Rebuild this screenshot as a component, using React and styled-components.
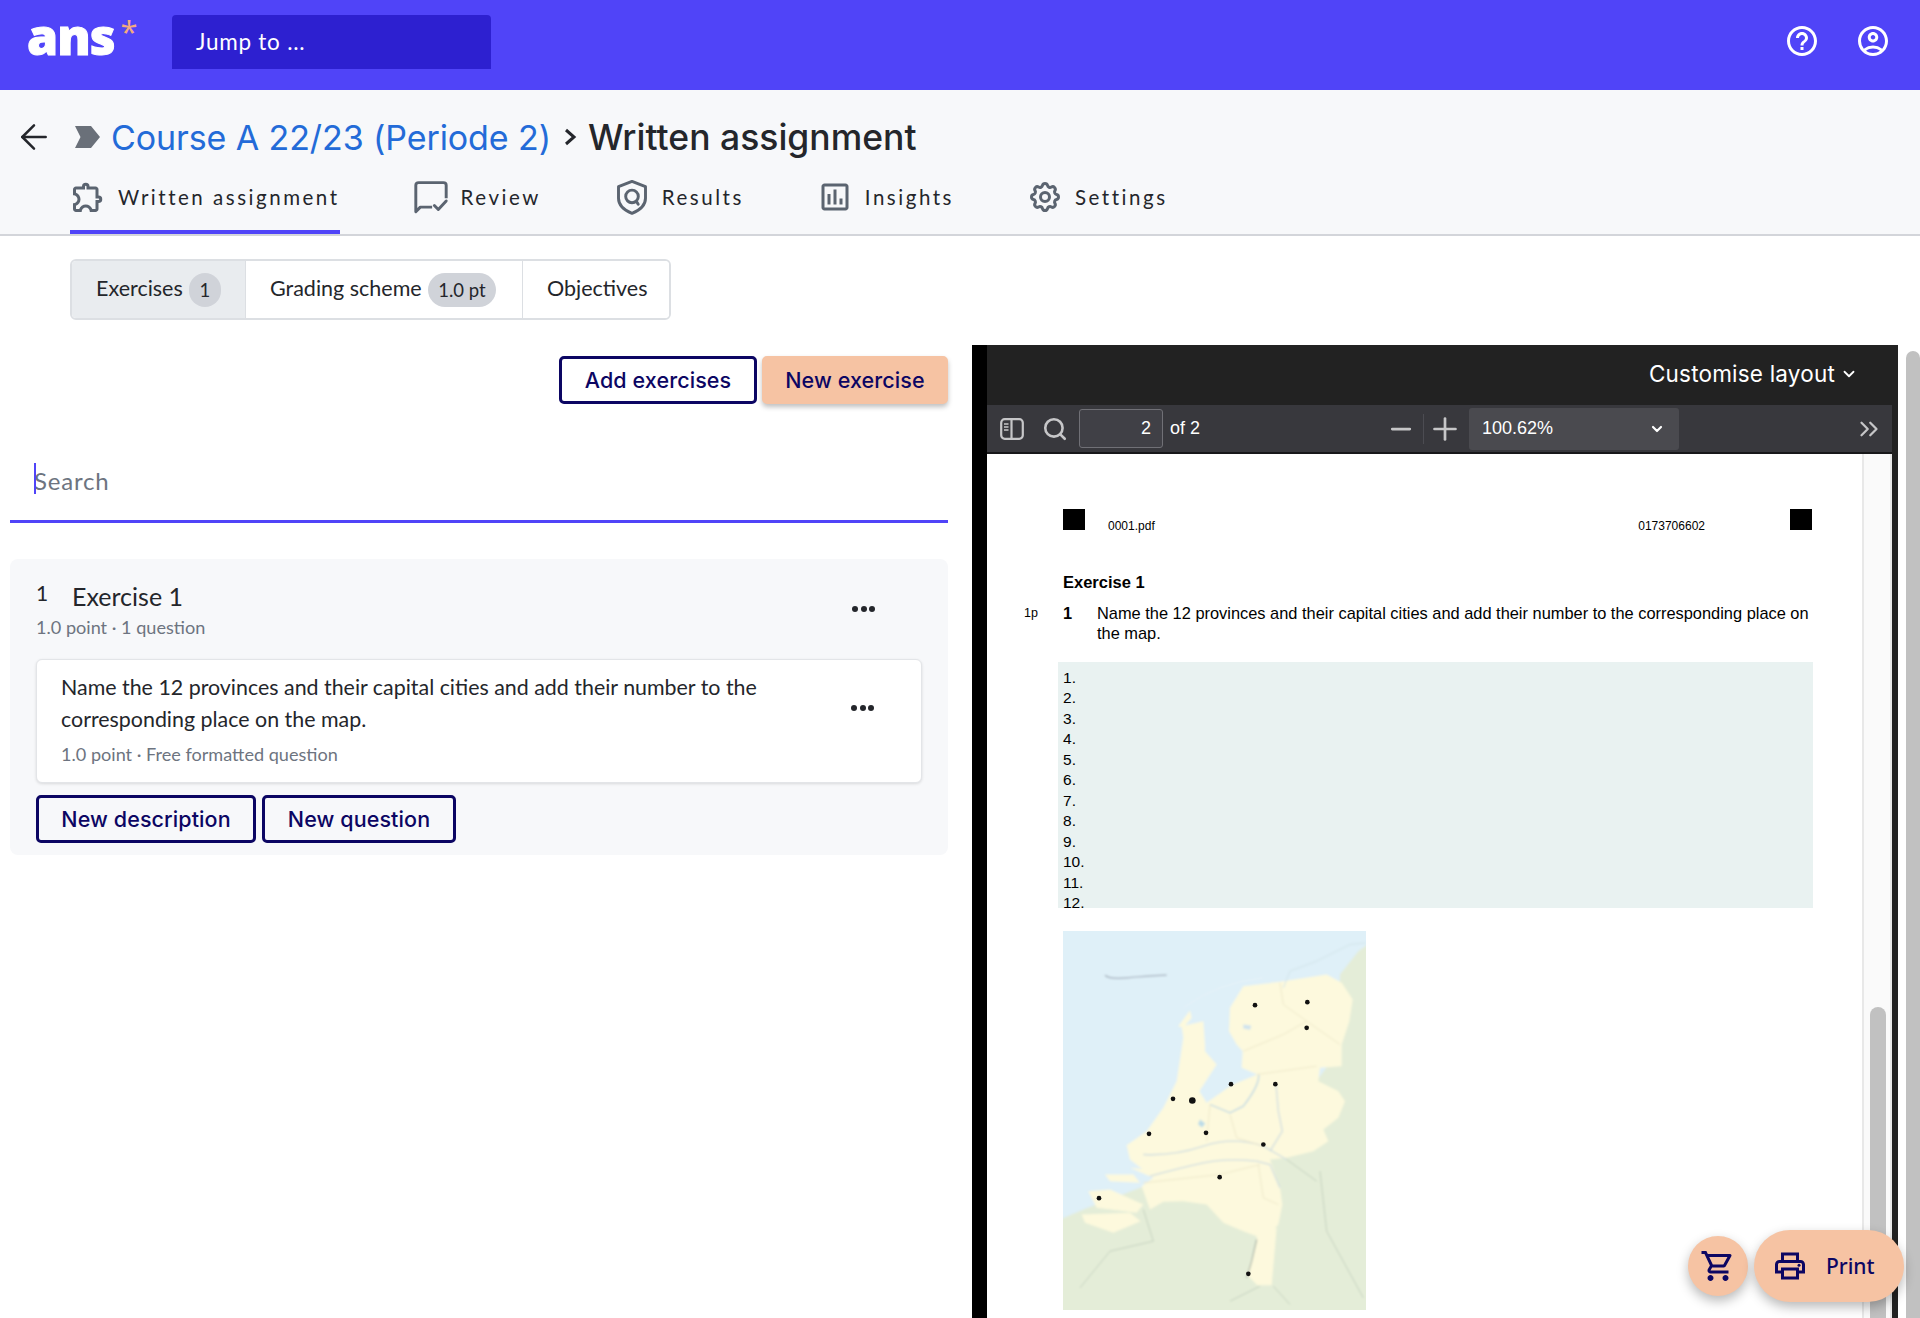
import React from "react";
import styled, { createGlobalStyle } from "styled-components";
import { ArrowLeft, Minus, Plus, ChevronDown, ChevronsRight, Search as SearchIcon } from "lucide-react";
import { MdHelpOutline, MdOutlineAccountCircle, MdOutlineExtension, MdOutlinePrint, MdOutlineShoppingCart, MdOutlineAssessment } from "react-icons/md";
import { HiOutlineCog } from "react-icons/hi";

const heading = `Inter, "Open Sans", sans-serif`;
const body = `Lato, "Open Sans", sans-serif`;
const pdf = `"Liberation Sans", Arial, sans-serif`;
const navy = "#0c0663";
const peach = "#f6c3a3";
const purple = "#5044f8";

const Global = createGlobalStyle`
  html, body {
    margin: 0;
    height: 1318px;
    overflow: hidden;
    background: #fff;
    font-family: ${body};
    color: #24262b;
  }
  * { box-sizing: border-box; }
`;

const Page = styled.div`
  width: 1920px;
  height: 1318px;
  position: relative;
  overflow: hidden;
`;

const Header = styled.header`
  height: 90px;
  background: ${purple};
  display: flex;
  align-items: flex-start;
  padding: 15px 29px 0 27px;
`;

const Logo = styled.div`
  width: 145px;
  height: 54px;
  display: flex;
  align-items: flex-start;
  margin-top: -5px;
  font: 800 50px/52px ${`"Open Sans", sans-serif`};
  letter-spacing: -1px;
  -webkit-text-stroke: 1px #fff;
  color: #fff;
`;

const LogoStar = styled.span`
  font: 400 31px/30px ${`"Open Sans", sans-serif`};
  -webkit-text-stroke: 0;
  color: #f3ab7e;
  margin: 6px 0 0 6px;
`;

const JumpTo = styled.div`
  width: 319px;
  height: 54px;
  background: #2d20d0;
  border-radius: 4px 4px 0 0;
  display: flex;
  align-items: center;
  padding: 0 0 1px 24px;
  color: #fff;
  font: 400 22.5px ${body};
  letter-spacing: 0.75px;
`;

const HeaderIcons = styled.div`
  margin-left: auto;
  margin-top: 8px;
  display: flex;
  gap: 35px;
  color: #fff;
  font-size: 36px;
  line-height: 0;
`;

const SubHeader = styled.div`
  height: 146px;
  background: #f7f8fa;
  border-bottom: 2px solid #d3d5da;
  position: relative;
`;

const Crumbs = styled.div`
  height: 90px;
  display: flex;
  align-items: center;
  padding: 4px 0 0 14px;
  font: 500 34px ${heading};
`;

const CrumbMark = styled.svg`
  width: 25px;
  height: 22px;
  margin: 0 11px 0 21px;
  flex: none;
`;

const CrumbLink = styled.a`
  color: #236bd8;
  font-weight: 400;
  letter-spacing: -0.1px;
  white-space: nowrap;
`;

const CrumbSep = styled.svg`
  width: 16px;
  height: 20px;
  margin: 0 10px 0 11px;
  flex: none;
`;

const CrumbCurrent = styled.span`
  color: #24262b;
  font-size: 35.5px;
  white-space: nowrap;
`;

const Tabs = styled.nav`
  display: flex;
  gap: 73px;
  padding-left: 70px;
`;

const TabItem = styled.a`
  height: 54px;
  display: flex;
  align-items: flex-start;
  gap: 12px;
  color: #24262b;
  font: 400 20.5px/34px ${body};
  letter-spacing: 2.52px;
  border-bottom: 4px solid ${(p) => (p.$active ? purple : "transparent")};
  svg { color: #5b6470; width: 36px; height: 36px; margin-top: -1px; flex: none; }
`;

const SubTabs = styled.div`
  display: inline-flex;
  margin: 23px 0 25px 70px;
  height: 61px;
  border: 2px solid #dcdfe3;
  border-radius: 6px;
  overflow: hidden;
`;

const SubTab = styled.div`
  display: flex;
  align-items: center;
  gap: 6px;
  padding: 0 0 3px 24px;
  width: ${(p) => p.$w}px;
  font: 400 21.5px ${body};
  color: #24262b;
  background: ${(p) => (p.$active ? "#e9ecef" : "#fff")};
  border-left: ${(p) => (p.$first ? "0" : "1px solid #dcdfe3")};
  white-space: nowrap;
`;

const Pill = styled.span`
  height: 34px;
  min-width: 32px;
  padding: 0 10.5px;
  margin-top: 3px;
  border-radius: 17px;
  background: #d0d3d9;
  display: inline-flex;
  align-items: center;
  justify-content: center;
  font-size: 18.5px;
`;

const Split = styled.div`
  display: flex;
  align-items: flex-start;
`;

const LeftCol = styled.div`
  width: 972px;
  padding: 11px 24px 0 10px;
`;

const Actions = styled.div`
  display: flex;
  justify-content: flex-end;
  gap: 5px;
`;

const Button = styled.button`
  height: 48px;
  padding: 0;
  border-radius: 5px;
  border: 3px solid ${(p) => (p.$filled ? peach : navy)};
  background: ${(p) => (p.$filled ? peach : "transparent")};
  box-shadow: ${(p) => (p.$filled ? "0 3px 5px rgba(0,0,0,.25)" : "none")};
  color: ${navy};
  font: 500 21.5px ${heading};
  letter-spacing: 0.1px;
  white-space: nowrap;
  width: ${(p) => p.$w}px;
`;

const SearchBar = styled.div`
  margin-top: 45px;
  height: 74px;
  border-bottom: 3px solid ${purple};
  position: relative;
  display: flex;
  align-items: center;
  padding: 0 0 8px 24px;
  font: 400 24px ${body};
  letter-spacing: 0.8px;
  color: #6d7480;
`;

const Caret = styled.span`
  position: absolute;
  left: 24px;
  top: 14px;
  width: 2px;
  height: 31px;
  background: ${purple};
`;

const ExerciseCard = styled.section`
  margin-top: 36px;
  height: 296px;
  background: #f7f8fa;
  border-radius: 8px;
  padding: 22px 26px 0;
`;

const ExerciseHead = styled.div`
  display: flex;
  justify-content: space-between;
  height: 78px;
`;

const TitleRow = styled.div`
  display: flex;
  align-items: flex-start;
  font: 400 25px/30px ${body};
`;

const TitleNum = styled.span`
  width: 36px;
  font-size: 21px;
  line-height: 24px;
`;

const Meta = styled.div`
  font: 400 18.1px/24px ${body};
  color: #6d7480;
  margin-top: ${(p) => p.$top || 0}px;
`;

const Dots = styled.div`
  display: flex;
  gap: 2.5px;
  margin: ${(p) => p.$m};
  span { width: 6px; height: 6px; border-radius: 50%; background: #24262b; }
`;

const QuestionCard = styled.div`
  height: 124px;
  background: #fff;
  border: 1px solid #e3e5e8;
  border-radius: 6px;
  box-shadow: 0 1px 3px rgba(0,0,0,.12);
  padding: 11px 24px 0;
  display: flex;
  justify-content: space-between;
`;

const QuestionText = styled.div`
  width: 750px;
  font: 400 21.4px/32px ${body};
  color: #24262b;
`;

const CardActions = styled.div`
  display: flex;
  gap: 6px;
  margin-top: 12px;
`;

const PdfPanel = styled.div`
  width: 926px;
  height: 974px;
  border-left: 15px solid #000;
  background: #222;
  padding-right: 6px;
  display: flex;
  flex-direction: column;
`;

const PdfTop = styled.div`
  height: 60px;
  flex: none;
  display: flex;
  align-items: center;
  justify-content: flex-end;
  gap: 5px;
  padding: 0 34px 3px 0;
  color: #fff;
  font: 400 22.5px ${heading};
  letter-spacing: 0.2px;
`;

const PdfToolbar = styled.div`
  height: 49px;
  flex: none;
  background: #38383d;
  border-bottom: 2px solid #18181a;
  display: flex;
  align-items: center;
  color: #d8d8da;
  font: 400 18px ${pdf};
  padding-left: 13px;
  svg { flex: none; }
`;

const ToolbarSearch = styled(SearchIcon)`
  margin-left: 18px;
`;

const PageInput = styled.div`
  width: 84px;
  height: 39px;
  margin: 0 7px 0 11px;
  border: 1px solid #707076;
  border-radius: 3px;
  background: #404046;
  display: flex;
  align-items: center;
  justify-content: flex-end;
  padding-right: 11px;
  color: #fff;
`;

const OfPages = styled.span`
  color: #fff;
  width: 216px;
`;

const ZoomDivider = styled.span`
  width: 1px;
  height: 30px;
  background: #4c4c52;
  margin: 0 3px 0 7px;
`;

const ZoomSelect = styled.div`
  width: 210px;
  height: 42px;
  margin-left: 6px;
  background: #4a4a4f;
  border-radius: 3px;
  display: flex;
  align-items: center;
  justify-content: space-between;
  padding: 0 14px 0 13px;
  color: #fff;
`;

const ToolbarEnd = styled.div`
  margin-left: auto;
  margin-right: 8px;
  display: flex;
  line-height: 0;
`;

const PdfBody = styled.div`
  flex: 1;
  min-height: 0;
  display: flex;
  background: #fff;
`;

const PdfPage = styled.div`
  flex: 1;
  min-width: 0;
  padding: 55px 0 0 76px;
  color: #000;
  font: 400 16px/20px ${pdf};
`;

const PdfTrack = styled.div`
  width: 30px;
  flex: none;
  background: #fafafa;
  border-left: 2px solid #e8e8e8;
  border-right: 2px solid #e8e8e8;
  padding: 553px 0 0 6px;
`;

const PdfThumb = styled.div`
  width: 16px;
  height: 400px;
  background: #c1c1c1;
  border-radius: 8px 8px 0 0;
`;

const PdfHead = styled.div`
  width: 749px;
  height: 31px;
  display: flex;
  font-size: 12px;
`;

const Mark = styled.div`
  width: 22px;
  height: 21px;
  background: #000;
  flex: none;
`;

const PdfHeadText = styled.span`
  margin: ${(p) => p.$m};
  line-height: 14px;
  padding-top: 10px;
`;

const PdfTitle = styled.div`
  margin-top: 32px;
  font-weight: 700;
  font-size: 16.5px;
  line-height: 20px;
`;

const PdfQuestion = styled.div`
  display: grid;
  grid-template-columns: 39px 34px 730px;
  margin: 11px 0 0 -39px;
  font-size: 16.4px;
`;

const PdfPoints = styled.span`
  font-size: 12.5px;
`;

const PdfStrong = styled.span`
  font-weight: 700;
`;

const AnswerBlock = styled.ol`
  list-style: none;
  margin: 19px 0 0 -5px;
  padding: 6px 5px 0;
  width: 755px;
  height: 246px;
  background: #e9f2f1;
  font-size: 15.5px;
  line-height: 20.45px;
`;

const MapDrawing = styled.svg`
  display: block;
  margin-top: 23px;
  width: 303px;
  height: 379px;
`;

const PageScroll = styled.div`
  width: 22px;
  height: 974px;
  flex: none;
  padding: 6px 0 0 8px;
`;

const PageThumb = styled.div`
  width: 14px;
  height: 968px;
  background: #c1c1c1;
  border-radius: 7px 7px 0 0;
`;

const Float = styled.button`
  position: absolute;
  border: 0;
  padding: 0;
  background: ${peach};
  color: ${navy};
  box-shadow: 0 5px 12px rgba(0,0,0,.28);
  display: flex;
  align-items: center;
  justify-content: center;
`;

const CartButton = styled(Float)`
  left: 1688px;
  top: 1236px;
  width: 60px;
  height: 60px;
  border-radius: 50%;
  font-size: 36px;
`;

const PrintButton = styled(Float)`
  left: 1754px;
  top: 1230px;
  width: 150px;
  height: 72px;
  border-radius: 36px;
  justify-content: flex-start;
  padding-left: 18px;
  gap: 18px;
  font: 500 21px "Noto Sans", sans-serif;
  svg { width: 36px; height: 36px; }
`;

const ReviewIcon = () => (
  <svg viewBox="0 0 32 32" fill="none" stroke="currentColor" strokeWidth="2.6">
    <path d="M17 25H6.5L2.5 29V5.5Q2.5 3.2 5 3.2H27Q29.5 3.2 29.5 5.5V17" strokeLinejoin="round" />
    <path d="M19 23.5l3.5 3.6 7-7.6" strokeLinecap="round" strokeLinejoin="round" />
  </svg>
);

const ShieldIcon = () => (
  <svg viewBox="0 0 32 32" fill="none" stroke="currentColor" strokeWidth="2.6">
    <path d="M16 2.2 L28 6.8 V17 Q28 25.5 16 30.5 Q4 25.5 4 17 V6.8 Z" strokeLinejoin="round" />
    <circle cx="16" cy="15.5" r="5.6" />
    <path d="M20 20l1.5 2.5" strokeLinecap="round" />
  </svg>
);

const SidebarIcon = () => (
  <svg width="24" height="22" viewBox="0 0 24 22" fill="none" stroke="#c6c6c8" strokeWidth="2.2">
    <rect x="1.2" y="1.2" width="21.6" height="19.6" rx="3.5" />
    <path d="M11.5 1.2v19.6" />
    <path d="M4 6h4.5M4 9h4.5M4 12h4.5" strokeWidth="1.4" />
  </svg>
);

const NetherlandsMap = () => (
  <MapDrawing viewBox="99 60 909 1136">
    <defs>
      <filter id="soft"><feGaussianBlur stdDeviation="2.4" /></filter>
    </defs>
    <g filter="url(#soft)">
      <rect x="90" y="50" width="930" height="1160" fill="#dff0f8" />
      <path d="M90 925L160 895L330 830L720 700L925 420L930 190L985 120L1020 95V1210H90Z" fill="#e4edd8" />
      <path d="M600 290L640 225L750 212L890 190L935 215L968 265L958 330L935 400L935 465L870 470L865 510L925 540L945 570L925 620L880 655L895 690L850 720L770 740L720 745L750 830L757 880L745 940L700 990L680 975L640 960L580 935L530 880L460 870L400 872L360 895L335 825L370 800L300 745L290 702L350 660L400 590L440 510L460 380L455 345L520 330L525 400L600 290Z" fill="#fdf9dd" />
      <path d="M680 975L740 950L725 1122H682L650 1090L680 990Z" fill="#fdf9dd" />
      <path d="M525 345L600 290L597 360L620 400L638 420L635 470L682 490L610 520L530 575L508 540L560 460L525 420Z" fill="#dff0f8" />
      <path d="M535 572L600 525L672 495L686 525L645 585L600 610L565 585Z" fill="#fdf9dd" />
      <path d="M445 345L480 298L485 320L460 350Z" fill="#fdf9dd" />
      <path d="M175 840L240 835L340 880L320 905L200 890Z" fill="#fdf9dd" />
      <path d="M155 910L300 905L332 930L250 965L165 935Z" fill="#fdf9dd" />
      <path d="M225 790L310 790L330 815L240 810Z" fill="#fdf9dd" />
      <path d="M240 745L300 770L350 775L370 800L300 770Z" fill="#fdf9dd" />
      <g fill="none" stroke="#d2dfe0" strokeWidth="4">
        <path d="M340 730Q430 735 520 705T700 705L770 745" />
        <path d="M360 795Q450 770 520 755T680 750L720 760L750 830" />
        <path d="M686 490Q690 520 640 585L600 605L540 580" stroke="#bfd8e4" />
        <path d="M738 520L745 600L757 660L720 720" />
        <path d="M680 985L665 1050L650 1100" stroke="#aeb9ac" />
      </g>
      <g fill="none" stroke="#efe9cc" strokeWidth="3">
        <path d="M750 215L760 280L830 330L930 400" />
        <path d="M640 420L760 370L830 330" />
        <path d="M680 490L860 465" />
        <path d="M600 610L620 680L700 705" />
        <path d="M540 580L530 690" />
        <path d="M340 815L570 790L690 760" />
        <path d="M685 760L700 860L745 880" />
      </g>
      <g fill="none" stroke="#c6d2c0" strokeWidth="3">
        <path d="M870 780L890 960L1000 1160" />
        <path d="M770 745L860 810" />
        <path d="M340 895L370 990L240 1020L150 1130" />
        <path d="M730 1125L780 1180" />
        <path d="M600 1170L690 1125" />
        <path d="M1008 95L960 100L860 150L780 180L760 230" stroke="#d2e4ea" />
        <path d="M460 290Q560 215 700 200" stroke="#e8f4f8" />
      </g>
      <path d="M225 192Q240 205 290 200T410 192" fill="none" stroke="#a3aebb" strokeWidth="4" />
      <path d="M640 340l24 4l-4 12l-20-4Z" fill="#cfe3ee" />
      <path d="M510 625l16 12l-10 12l-12-10Z" fill="#bcdce8" />
    </g>
    <g fill="#111">
      {[[675, 282], [832, 273], [830, 350], [603, 519], [736, 519], [429, 563], [357, 668], [528, 665], [700, 700], [569, 798], [207, 861], [655, 1088]].map(([x, y]) => (
        <circle key={x + "-" + y} cx={x} cy={y} r="7" />
      ))}
      <circle cx="487" cy="568" r="10" />
    </g>
  </MapDrawing>
);

const tabs = [
  { label: "Written assignment", icon: <MdOutlineExtension />, active: true },
  { label: "Review", icon: <ReviewIcon /> },
  { label: "Results", icon: <ShieldIcon /> },
  { label: "Insights", icon: <MdOutlineAssessment /> },
  { label: "Settings", icon: <HiOutlineCog /> },
];

const ThreeDots = ({ m }) => (
  <Dots $m={m}>
    <span />
    <span />
    <span />
  </Dots>
);

export default function App() {
  return (
    <Page>
      <Global />
      <Header>
        <Logo>
          ans<LogoStar>*</LogoStar>
        </Logo>
        <JumpTo>Jump to ...</JumpTo>
        <HeaderIcons>
          <MdHelpOutline />
          <MdOutlineAccountCircle />
        </HeaderIcons>
      </Header>

      <SubHeader>
        <Crumbs>
          <ArrowLeft size={40} color="#24262b" strokeWidth={1.5} />
          <CrumbMark viewBox="0 0 25 22">
            <path d="M0 0H16L25 11L16 22H0L5.5 11Z" fill="#6a7079" />
          </CrumbMark>
          <CrumbLink>Course A 22/23 (Periode 2)</CrumbLink>
          <CrumbSep viewBox="0 0 16 20">
            <path d="M4 3l8 7-8 7" fill="none" stroke="#24262b" strokeWidth="3" />
          </CrumbSep>
          <CrumbCurrent>Written assignment</CrumbCurrent>
        </Crumbs>
        <Tabs>
          {tabs.map((t) => (
            <TabItem key={t.label} $active={t.active}>
              {t.icon}
              {t.label}
            </TabItem>
          ))}
        </Tabs>
      </SubHeader>

      <SubTabs>
        <SubTab $first $active $w={173}>
          Exercises <Pill>1</Pill>
        </SubTab>
        <SubTab $w={277}>
          Grading scheme <Pill>1.0 pt</Pill>
        </SubTab>
        <SubTab $w={147}>Objectives</SubTab>
      </SubTabs>

      <Split>
        <LeftCol>
          <Actions>
            <Button $w={198}>Add exercises</Button>
            <Button $filled $w={186}>New exercise</Button>
          </Actions>
          <SearchBar>
            <Caret />
            Search
          </SearchBar>
          <ExerciseCard>
            <ExerciseHead>
              <div>
                <TitleRow>
                  <TitleNum>1</TitleNum>
                  Exercise 1
                </TitleRow>
                <Meta $top={4}>1.0 point · 1 question</Meta>
              </div>
              <ThreeDots m="25px 47px 0 0" />
            </ExerciseHead>
            <QuestionCard>
              <div>
                <QuestionText>
                  Name the 12 provinces and their capital cities and add their number to the corresponding place on the map.
                </QuestionText>
                <Meta $top={7}>1.0 point · Free formatted question</Meta>
              </div>
              <ThreeDots m="34px 23px 0 0" />
            </QuestionCard>
            <CardActions>
              <Button $w={220}>New description</Button>
              <Button $w={194}>New question</Button>
            </CardActions>
          </ExerciseCard>
        </LeftCol>

        <PdfPanel>
          <PdfTop>
            Customise layout
            <ChevronDown size={18} strokeWidth={2.4} />
          </PdfTop>
          <PdfToolbar>
            <SidebarIcon />
            <ToolbarSearch size={26} color="#c6c6c8" strokeWidth={2.4} />
            <PageInput>2</PageInput>
            <OfPages>of 2</OfPages>
            <Minus size={30} color="#c6c6c8" strokeWidth={2.2} />
            <ZoomDivider />
            <Plus size={36} color="#c6c6c8" strokeWidth={1.8} />
            <ZoomSelect>
              100.62%
              <ChevronDown size={16} strokeWidth={3.2} />
            </ZoomSelect>
            <ToolbarEnd>
              <ChevronsRight size={30} color="#c6c6c8" strokeWidth={1.8} />
            </ToolbarEnd>
          </PdfToolbar>
          <PdfBody>
            <PdfPage>
              <PdfHead>
                <Mark />
                <PdfHeadText $m="0 auto 0 23px">0001.pdf</PdfHeadText>
                <PdfHeadText $m="0 85px 0 0">0173706602</PdfHeadText>
                <Mark />
              </PdfHead>
              <PdfTitle>Exercise 1</PdfTitle>
              <PdfQuestion>
                <PdfPoints>1p</PdfPoints>
                <PdfStrong>1</PdfStrong>
                <span>Name the 12 provinces and their capital cities and add their number to the corresponding place on the map.</span>
              </PdfQuestion>
              <AnswerBlock>
                {Array.from({ length: 12 }, (_, i) => (
                  <li key={i}>{i + 1}.</li>
                ))}
              </AnswerBlock>
              <NetherlandsMap />
            </PdfPage>
            <PdfTrack>
              <PdfThumb />
            </PdfTrack>
          </PdfBody>
        </PdfPanel>
        <PageScroll>
          <PageThumb />
        </PageScroll>
      </Split>

      <CartButton>
        <MdOutlineShoppingCart />
      </CartButton>
      <PrintButton>
        <MdOutlinePrint />
        Print
      </PrintButton>
    </Page>
  );
}
